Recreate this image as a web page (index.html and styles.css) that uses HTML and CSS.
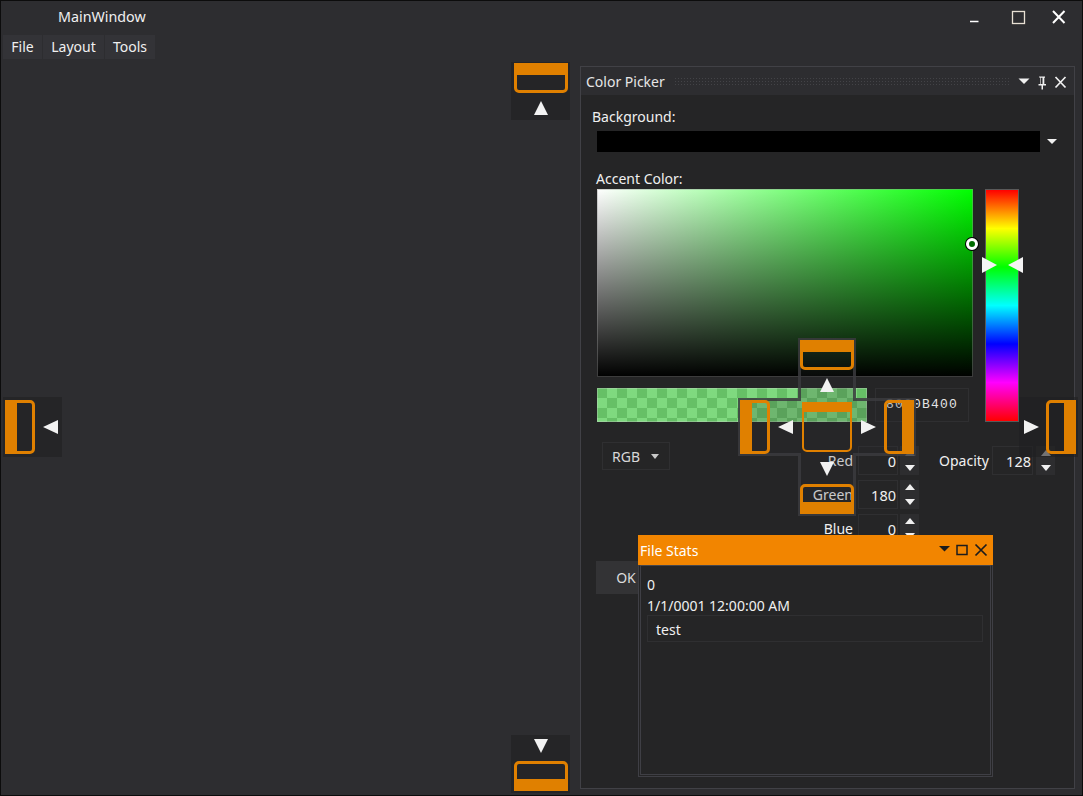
FILE: index.html
```html
<!DOCTYPE html>
<html lang="en">
<head>
    <meta charset="UTF-8">
    <title>MainWindow</title>
    <link rel="stylesheet" href="styles.css">
</head>
<body>
    <div class="window">
        <div class="titlebar">
            <span class="window_title">MainWindow</span>
            <svg class="window_btns" width="123" height="31" viewBox="0 0 123 31">
                <path d="M11 20.500h8.500" stroke="#fff" stroke-width="1.500" fill="none"/>
                <rect x="53.500" y="10.500" width="12" height="12" stroke="#e8e0d4" stroke-width="1.300" fill="none"/>
                <path d="M94 10l11.500 12M105.500 10L94 22" stroke="#fff" stroke-width="2" fill="none"/>
            </svg>
        </div>
        <div class="menu">
            <div class="menu_item m_file">File</div>
            <div class="menu_item m_layout">Layout</div>
            <div class="menu_item m_tools">Tools</div>
        </div>
        <div class="workspace">
            <div class="pane">
                <div class="pane_title">
                    <span>Color Picker</span>
                    <div class="grip"></div>
                    <svg width="60" height="18" viewBox="0 0 60 18">
                        <path d="M4.500 6.500h11l-5.500 5.500z" fill="#f0f0f0"/>
                        <path d="M25 4.500h6v1.200h-.7v6.300h1.700v1.500h-3v4h-1.500v-4h-3v-1.500h1.700v-6.300h-.7zM26.800 5.700v6.300h1.700V5.700z" fill="#f0f0f0"/>
                        <path d="M41.500 5l10 10.500M51.500 5l-10 10.500" stroke="#f0f0f0" stroke-width="1.700" fill="none"/>
                    </svg>
                </div>
                <div class="pane_body">
                    <div class="lbl_bg">Background:</div>
                    <div class="bg_row">
                        <div class="bg_swatch"></div>
                        <div class="tri_down small"></div>
                    </div>
                    <div class="lbl_accent">Accent Color:</div>
                    <div class="picker">
                        <div class="sv"><div class="sv_dot"></div></div>
                        <div class="hue">
                            <div class="hue_l"></div>
                            <div class="hue_r"></div>
                        </div>
                        <div class="preview_row">
                            <div class="preview"></div>
                            <div class="hex">8000B400</div>
                        </div>
                    </div>
                    <div class="lower">
                        <div class="mode">RGB<div class="tri_down gray"></div></div>
                        <div class="channels">
                            <div class="ch_label">Red</div>
                            <div class="num">0</div>
                            <div class="spin"><i class="up"></i><i class="down"></i></div>
                            <div class="ch_label">Green</div>
                            <div class="num">180</div>
                            <div class="spin"><i class="up"></i><i class="down"></i></div>
                            <div class="ch_label">Blue</div>
                            <div class="num">0</div>
                            <div class="spin"><i class="up"></i><i class="down"></i></div>
                        </div>
                        <div class="opacity">
                            <div class="ch_label">Opacity</div>
                            <div class="num wide">128</div>
                            <div class="spin"><i class="up"></i><i class="down"></i></div>
                        </div>
                    </div>
                    <div class="ok_btn">OK</div>
                </div>
            </div>
        </div>
    </div>

    <div class="float">
        <div class="float_title">
            <span>File Stats</span>
            <svg width="56" height="16" viewBox="0 0 56 16">
                <path d="M2 4h11l-5.500 5.500z" fill="#1c1c1c"/>
                <rect x="20" y="3.500" width="10" height="9" stroke="#1c1c1c" stroke-width="1.500" fill="none"/>
                <path d="M38.500 2.500l11 11M49.500 2.500l-11 11" stroke="#1c1c1c" stroke-width="1.700" fill="none"/>
            </svg>
        </div>
        <div class="float_body">
            <div class="stat">0</div>
            <div class="stat">1/1/0001 12:00:00 AM</div>
            <div class="stat_box">test</div>
        </div>
    </div>

    <!-- dock guides -->
    <div class="guide g_top"><div class="dock d_top"></div><div class="arr a_up"></div></div>
    <div class="guide g_bottom"><div class="arr a_down"></div><div class="dock d_bottom"></div></div>
    <div class="guide g_left"><div class="dock d_left"></div><div class="arr a_left"></div></div>
    <div class="guide g_right"><div class="arr a_right"></div><div class="dock d_right"></div></div>

    <div class="cross">
        <svg class="cross_bg" width="178" height="178" viewBox="0 0 178 178">
            <path d="M61.500 1.500h55v60h60v55h-60v60h-55v-60h-60v-55h60z" fill="#2d2d30" fill-opacity="0.2" stroke="#3b3b3e" stroke-opacity="0.85" stroke-width="3"/>
        </svg>
        <div class="dock d_top c_top"></div>
        <div class="arr a_up c_aup"></div>
        <div class="dock d_left c_left"></div>
        <div class="arr a_left c_aleft"></div>
        <div class="dock c_center"></div>
        <div class="arr a_right c_aright"></div>
        <div class="dock d_right c_right"></div>
        <div class="arr a_down c_adown"></div>
        <div class="dock d_bottom c_bottom"></div>
    </div>
</body>
</html>
```

FILE: styles.css
```css
* {
    box-sizing: border-box;
}

body {
    margin: 0;
    background: #2d2d30;
    font-family: "Noto Sans", "Open Sans", sans-serif;
    font-size: 14px;
    color: #f0f0f0;
    overflow: hidden;
}

.window {
    width: 1083px;
    height: 796px;
    border: 1px solid #0c0c0c;
    background: #2d2d30;
    display: flex;
    flex-direction: column;
}

.titlebar {
    height: 31px;
    display: flex;
    align-items: center;
    justify-content: space-between;
    padding-left: 57px;
}

.window_title {
    line-height: 31px;
    font-size: 14.300px;
}

.window_btns {
    display: block;
}

.menu {
    display: flex;
    gap: 1px;
    height: 24px;
    margin: 3px 0 0 2px;
}

.menu_item {
    background: #333337;
    line-height: 24px;
    text-align: center;
}

.m_file { width: 39px; }
.m_layout { width: 61px; }
.m_tools { width: 50px; }

.workspace {
    flex: 1;
    display: flex;
    justify-content: flex-end;
    padding: 7px 7px 6px 0;
}

.pane {
    width: 495px;
    border: 1px solid #414146;
    background: #252526;
    display: flex;
    flex-direction: column;
}

.pane_title {
    height: 28px;
    background: #2d2d30;
    display: flex;
    align-items: center;
    padding-left: 5px;
    color: #e6e6e6;
}

.grip {
    flex: 1;
    height: 8px;
    margin: 0 4px 0 9px;
    background-image: radial-gradient(#434347 0.7px, transparent 0.8px);
    background-size: 3px 3px;
}

.pane_body {
    flex: 1;
    padding: 13px 0 0 12px;
    line-height: 18px;
}

.lbl_bg {
    margin-left: -1px;
}

.bg_row {
    display: flex;
    align-items: center;
    margin: 5px 0 0 4px;
}

.bg_swatch {
    width: 443px;
    height: 21px;
    background: #000;
}

.tri_down {
    width: 0;
    height: 0;
    border-style: solid;
    border-color: #f0f0f0 transparent transparent transparent;
}

.tri_down.small {
    border-width: 5px 5px 0 5px;
    margin-left: 7px;
}

.tri_down.gray {
    border-width: 5px 4.500px 0 4.500px;
    border-top-color: #c8c8c8;
}

.lbl_accent {
    margin: 18px 0 1px 3px;
}

.picker {
    display: grid;
    grid-template-columns: 376px 34px;
    grid-template-rows: 188px 34px;
    column-gap: 12px;
    row-gap: 11px;
    margin-left: 4px;
}

.sv {
    position: relative;
    border: 1px solid rgba(150, 150, 150, 0.4);
    background:
        linear-gradient(to bottom, rgba(0,0,0,0), #000) border-box,
        linear-gradient(to right, #fff, #00ff00) border-box;
}

.sv_dot {
    position: absolute;
    right: -6px;
    top: 48px;
    width: 12px;
    height: 12px;
    border: 3px solid #fff;
    border-radius: 50%;
    background: #006b00;
    box-shadow: 0 0 0 1px #000;
}

.hue {
    grid-row: 1 / 3;
    grid-column: 2;
    position: relative;
    border: 1px solid #5a5a5a;
    background: linear-gradient(to bottom, #f00, #ff0 16.66%, #0f0 33.33%, #0ff 50%, #00f 66.66%, #f0f 83.33%, #f00);
}

.hue_l, .hue_r {
    position: absolute;
    top: 67px;
    width: 0;
    height: 0;
    border-style: solid;
    border-width: 8.500px 0 8.500px 15px;
    border-color: transparent transparent transparent #f4f4f4;
}

.hue_l {
    left: -4px;
}

.hue_r {
    right: -5px;
    border-width: 8.500px 15px 8.500px 0;
    border-color: transparent #f4f4f4 transparent transparent;
}

.preview_row {
    display: flex;
    gap: 8px;
}

.preview {
    width: 270px;
    border: 1px solid rgba(210, 210, 210, 0.35);
    background:
        linear-gradient(rgba(0,180,0,0.5), rgba(0,180,0,0.5)) border-box,
        repeating-conic-gradient(#fff 0 25%, #ccc 0 50%) 0 0 / 20px 20px border-box;
}

.hex {
    width: 94px;
    border: 1px solid #2f2f31;
    font-family: "Liberation Mono", monospace;
    font-size: 13px;
    letter-spacing: 1.200px;
    line-height: 32px;
    text-align: center;
    color: #e4e4e4;
}

.lower {
    display: flex;
    align-items: flex-start;
    margin: 20px 0 0 9px;
}

.mode {
    width: 68px;
    height: 28px;
    border: 1px solid #2f2f31;
    display: flex;
    align-items: center;
    gap: 11px;
    padding: 1px 0 0 9px;
    color: #d8d8d8;
}

.channels {
    display: grid;
    grid-template-columns: 64px 40px 19px;
    grid-auto-rows: 29px;
    column-gap: 2px;
    row-gap: 5px;
    margin: 4px 0 0 122px;
}

.channels .ch_label {
    padding-right: 3px;
}

.ch_label {
    text-align: right;
    line-height: 29px;
}

.num {
    border: 1px solid #2f2f31;
    text-align: right;
    line-height: 29px;
    padding-right: 1px;
    font-size: 14.500px;
}

.num.wide {
    width: 41px;
}

.spin {
    background: #2d2d2f;
    display: flex;
    flex-direction: column;
    justify-content: space-between;
    align-items: center;
    padding: 4px 0;
    width: 19px;
}

.spin .up, .spin .down {
    display: block;
    width: 0;
    height: 0;
    border-style: solid;
}

.spin .up {
    border-width: 0 5px 6px 5px;
    border-color: transparent transparent #f0f0f0 transparent;
}

.spin .down {
    border-width: 6px 5px 0 5px;
    border-color: #f0f0f0 transparent transparent transparent;
}

.opacity {
    display: grid;
    grid-template-columns: 51px 41px 19px;
    grid-auto-rows: 29px;
    column-gap: 3px;
    margin: 4px 0 0 19px;
}

.ok_btn {
    width: 64px;
    height: 33px;
    margin: 18px 0 0 3px;
    background: #333335;
    line-height: 33px;
    text-align: center;
    color: #dcdcdc;
    padding-right: 4px;
}

/* floating window */
.float {
    position: absolute;
    left: 638px;
    top: 535px;
    width: 355px;
    height: 242px;
    display: flex;
    flex-direction: column;
}

.float_title {
    height: 30px;
    flex-shrink: 0;
    background: #f28500;
    display: flex;
    align-items: center;
    justify-content: space-between;
    padding-left: 2px;
    color: #fff;
}

.float_body {
    flex: 1;
    background: #252526;
    border: 3px double #3f3f45;
    border-top: 1px solid #46464c;
    padding: 8px 7px 0 6px;
}

.stat {
    line-height: 21px;
}

.stat_box {
    height: 27px;
    margin-top: -1px;
    border: 1px solid #2f2f31;
    line-height: 27px;
    padding-left: 8px;
}

/* dock guides */
.guide {
    position: absolute;
    background: rgba(32, 32, 34, 0.6);
    display: flex;
    align-items: center;
    justify-content: space-between;
}

.g_top {
    left: 511px;
    top: 62px;
    width: 59px;
    height: 58px;
    flex-direction: column;
    padding: 1px 3px 5px;
}

.g_bottom {
    left: 511px;
    top: 735px;
    width: 59px;
    height: 58px;
    flex-direction: column;
    padding: 4px 3px 2px;
}

.g_left {
    left: 3px;
    top: 397px;
    width: 59px;
    height: 60px;
    padding: 3px 4px 3px 2px;
}

.g_right {
    left: 1019px;
    top: 397px;
    width: 59px;
    height: 60px;
    padding: 3px 2px 3px 5px;
}

.dock {
    border: 3px solid #e08000;
    flex-shrink: 0;
}

.d_top, .d_bottom {
    width: 54px;
    height: 30px;
}

.d_left, .d_right {
    width: 30px;
    height: 54px;
}

.d_top {
    border-top-width: 12px;
    border-radius: 0 0 5px 5px;
}

.d_bottom {
    border-bottom-width: 12px;
    border-radius: 5px 5px 0 0;
}

.d_left {
    border-left-width: 12px;
    border-radius: 0 5px 5px 0;
}

.d_right {
    border-right-width: 12px;
    border-radius: 5px 0 0 5px;
}

.arr {
    width: 0;
    height: 0;
    border-style: solid;
    flex-shrink: 0;
}

.a_up {
    border-width: 0 7.500px 14px 7.500px;
    border-color: transparent transparent #f2f2f2 transparent;
}

.a_down {
    border-width: 14px 7.500px 0 7.500px;
    border-color: #f2f2f2 transparent transparent transparent;
}

.a_left {
    border-width: 7.500px 15px 7.500px 0;
    border-color: transparent #f2f2f2 transparent transparent;
}

.a_right {
    border-width: 7.500px 0 7.500px 15px;
    border-color: transparent transparent transparent #f2f2f2;
}

.cross {
    position: absolute;
    left: 738px;
    top: 338px;
    width: 178px;
    height: 178px;
}

.cross_bg {
    position: absolute;
    left: 0;
    top: 0;
}

.cross .dock, .cross .arr {
    position: absolute;
}

.c_top { left: 62px; top: 2px; }
.c_aup { left: 81.500px; top: 40px; }
.c_left { left: 2px; top: 62px; }
.c_aleft { left: 40px; top: 81.500px; }
.c_center {
    left: 64px;
    top: 64px;
    width: 50px;
    height: 50px;
    border-width: 2px;
    border-top-width: 10px;
    border-radius: 0 0 5px 5px;
}
.c_aright { left: 123px; top: 81.500px; }
.c_right { left: 146px; top: 62px; }
.c_adown { left: 81.500px; top: 124px; }
.c_bottom { left: 62px; top: 146px; }
```
